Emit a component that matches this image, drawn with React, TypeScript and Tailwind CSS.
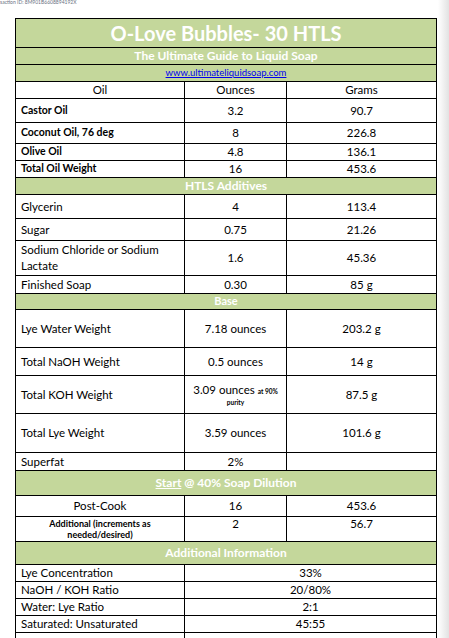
import React from 'react'

const font = { fontFamily: 'Lato, "Open Sans", "Liberation Sans", sans-serif' }

type Row3 = { h: string; a: React.ReactNode; b: React.ReactNode; c: React.ReactNode; bold?: boolean }

const Band = ({ h, children, size = 'text-[12px]' }: { h: string; children: React.ReactNode; size?: string }) => (
  <div className={`${h} flex items-center justify-center border-b border-black bg-[#c4d79b] text-white font-bold ${size}`}>
    {children}
  </div>
)

const Tri = ({ h, a, b, c, bold }: Row3) => (
  <div className={`${h} flex border-b border-black text-[11.5px] text-black`}>
    <div className={`w-[169px] shrink-0 border-r border-black pl-[5px] flex items-center ${bold ? 'font-bold text-[10.5px]' : ''}`}>{a}</div>
    <div className="w-[102px] shrink-0 border-r border-black flex items-center justify-center text-center">{b}</div>
    <div className="flex-1 flex items-center justify-center">{c}</div>
  </div>
)

const Duo = ({ a, b }: { a: string; b: string }) => (
  <div className="h-[17px] flex border-b border-black text-[11.5px] text-black">
    <div className="w-[169px] shrink-0 border-r border-black pl-[5px] flex items-center">{a}</div>
    <div className="flex-1 flex items-center justify-center">{b}</div>
  </div>
)

export default function App() {
  return (
    <div className="w-[449px] h-[638px] overflow-hidden bg-white flex" style={font}>
      <div className="flex-1">
        <div className="h-[19px] text-[5px] leading-[6px] text-gray-500 -mt-[1px]">saction ID: 8M901B6608894192X</div>
        <div className="ml-[15px] w-[422px] border-l border-t border-r border-black">
          <Band h="h-[29px]" size="text-[20px] leading-none">O-Love Bubbles- 30 HTLS</Band>
          <Band h="h-[17px]" size="text-[12px]">The Ultimate Guide to Liquid Soap</Band>
          <div className="h-[17px] flex items-center justify-center border-b border-black bg-[#c4d79b]">
            <span className="text-[9.5px] text-[#0000ee] underline">www.ultimateliquidsoap.com</span>
          </div>
          <div className="h-[17px] flex border-b border-black text-[11.5px] text-black">
            <div className="w-[169px] shrink-0 border-r border-black flex items-center justify-center">Oil</div>
            <div className="w-[102px] shrink-0 border-r border-black flex items-center justify-center">Ounces</div>
            <div className="flex-1 flex items-center justify-center">Grams</div>
          </div>
          <Tri h="h-[24px]" bold a="Castor Oil" b="3.2" c="90.7" />
          <Tri h="h-[21px]" bold a="Coconut Oil, 76 deg" b="8" c="226.8" />
          <Tri h="h-[17px]" bold a="Olive Oil" b="4.8" c="136.1" />
          <Tri h="h-[17px]" bold a="Total Oil Weight" b="16" c="453.6" />
          <Band h="h-[17px]">HTLS Additives</Band>
          <Tri h="h-[24px]" a="Glycerin" b="4" c="113.4" />
          <Tri h="h-[22px]" a="Sugar" b="0.75" c="21.26" />
          <Tri h="h-[35px]" a={<span className="leading-[16px]">Sodium Chloride or Sodium<br />Lactate</span>} b="1.6" c="45.36" />
          <Tri h="h-[18px]" a="Finished Soap" b="0.30" c="85 g" />
          <Band h="h-[16px]" size="text-[11px]">Base</Band>
          <Tri h="h-[38px]" a="Lye Water Weight" b="7.18 ounces" c="203.2 g" />
          <Tri h="h-[28px]" a="Total NaOH Weight" b="0.5 ounces" c="14 g" />
          <Tri
            h="h-[38px]"
            a="Total KOH Weight"
            b={
              <span className="leading-[14px]">
                3.09 ounces <span className="text-[6.5px] font-bold">at 90%</span>
                <br />
                <span className="text-[6.5px] font-bold leading-[8px] block">purity</span>
              </span>
            }
            c="87.5 g"
          />
          <Tri h="h-[39px]" a="Total Lye Weight" b="3.59 ounces" c="101.6 g" />
          <Tri h="h-[18px]" a="Superfat" b="2%" c="" />
          <Band h="h-[25px]">
            <span className="underline">Start</span>&nbsp;@ 40% Soap Dilution
          </Band>
          <div className="h-[21px] flex border-b border-black text-[11.5px] text-black">
            <div className="w-[169px] shrink-0 border-r border-black flex items-center justify-center">Post-Cook</div>
            <div className="w-[102px] shrink-0 border-r border-black flex items-center justify-center">16</div>
            <div className="flex-1 flex items-center justify-center">453.6</div>
          </div>
          <div className="h-[25px] flex border-b border-black text-black">
            <div className="w-[169px] shrink-0 border-r border-black flex justify-center text-center text-[9px] font-bold leading-[11px] pt-[1px]">
              Additional (increments as<br />needed/desired)
            </div>
            <div className="w-[102px] shrink-0 border-r border-black flex justify-center text-[11.5px] leading-[13px]">2</div>
            <div className="flex-1 flex justify-center text-[11.5px] leading-[13px]">56.7</div>
          </div>
          <Band h="h-[23px]">Additional Information</Band>
          <Duo a="Lye Concentration" b="33%" />
          <Duo a="NaOH / KOH Ratio" b="20/80%" />
          <Duo a="Water: Lye Ratio" b="2:1" />
          <Duo a="Saturated: Unsaturated" b="45:55" />
          <Duo a="" b="" />
        </div>
      </div>
      <div className="w-[11px] h-full bg-gradient-to-r from-white to-[#e2e2e2]" />
    </div>
  )
}
